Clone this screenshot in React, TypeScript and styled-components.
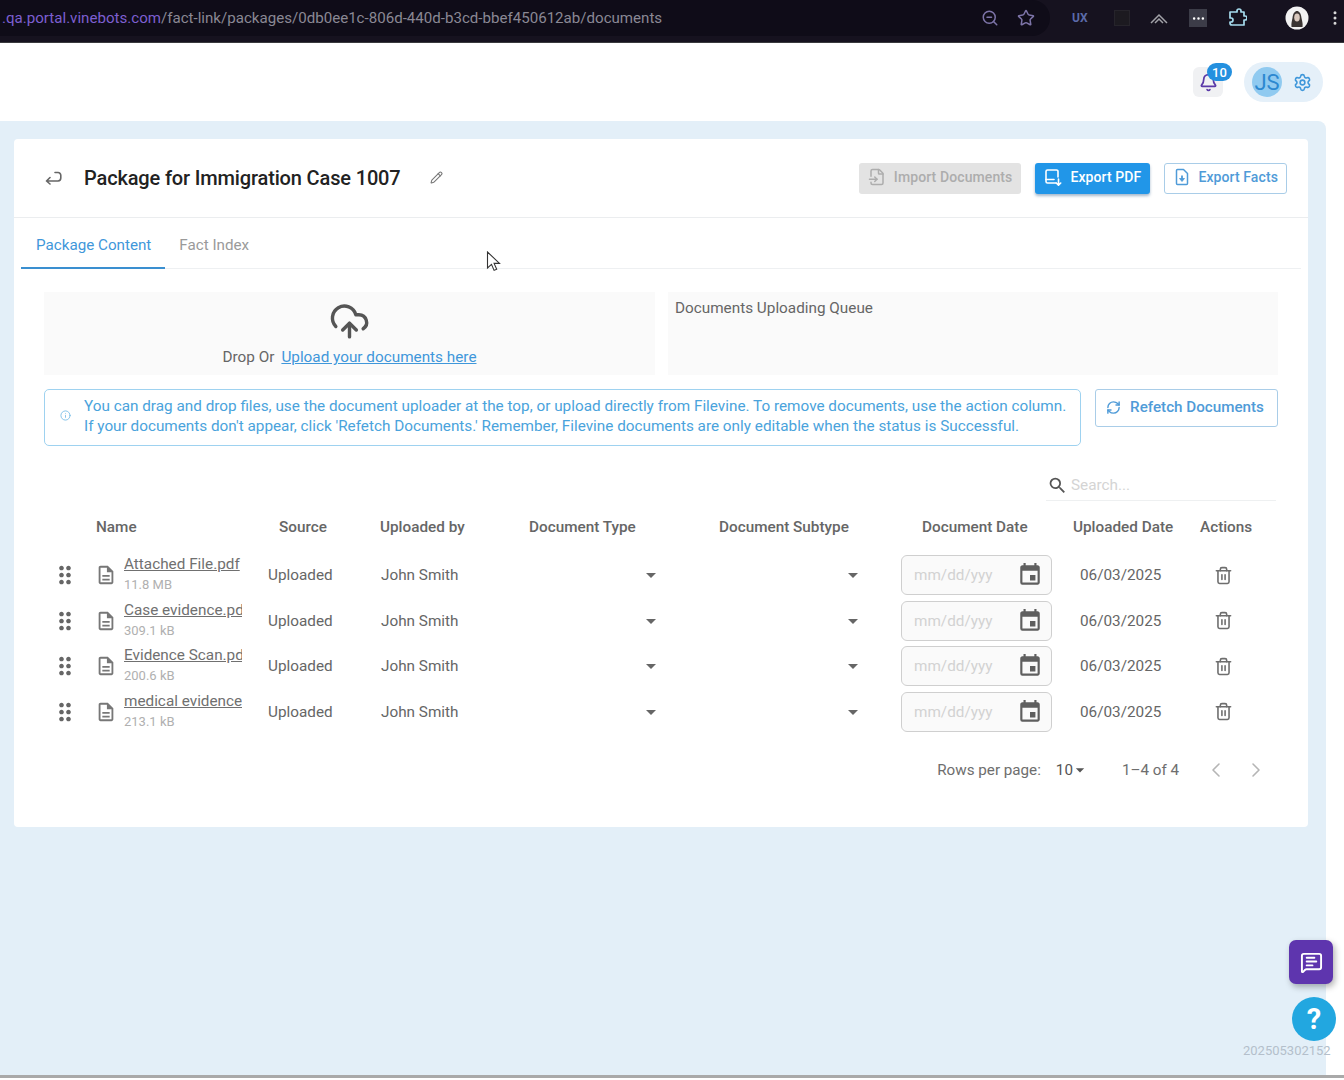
import React from "react";
import styled, { createGlobalStyle } from "styled-components";
import {
  Bell, ChevronLeft, ChevronRight, CloudUpload, Ellipsis, FileInput, Info,
  MessageSquareText, Pencil, RefreshCw, Settings, Star, Trash2, ZoomOut,
} from "lucide-react";
import { MdArrowDropDown, MdDragIndicator, MdEvent, MdOutlineDescription, MdSearch } from "react-icons/md";

const Global = createGlobalStyle`
  html, body { margin: 0; padding: 0; background: #fff; }
  body { font-family: Roboto, "Liberation Sans", sans-serif; color: #666; }
  * { box-sizing: border-box; }
`;

const Page = styled.div`
  position: relative;
  width: 1344px;
  height: 1080px;
  overflow: hidden;
  display: flex;
  flex-direction: column;
`;

const BrowserBar = styled.div`
  height: 43px;
  flex: none;
  background: #16121f;
  border-bottom: 1px solid #3a3a3e;
  display: flex;
  align-items: flex-start;
`;
const AddressPill = styled.div`
  width: 1052px;
  height: 36px;
  background: #0f0c18;
  border-radius: 0 18px 18px 0;
  display: flex;
  align-items: center;
  justify-content: space-between;
  padding: 0 15px 0 2px;
  font-size: 15.1px;
  color: #8a8894;
`;
const Url = styled.div`white-space: nowrap;`;
const UrlHost = styled.span`color: #7d5fd0;`;
const PillIcons = styled.div`
  display: flex;
  align-items: center;
  gap: 18px;
  color: #7d74a8;
`;
const Extensions = styled.div`
  flex: 1;
  height: 36px;
  display: flex;
  align-items: center;
  padding-left: 22px;
  color: #8a8fa0;
`;
const UxMark = styled.span`
  width: 18px;
  font-size: 12px;
  font-weight: 700;
  color: #5b6aa8;
`;
const DarkSquare = styled.span`
  width: 16px;
  height: 16px;
  margin-left: 24px;
  background: #1c1a20;
  border: 1px solid #26242b;
`;
const Peaks = styled.svg`
  margin-left: 20px;
  color: #a2a2a8;
`;
const DotsTile = styled.span`
  width: 18px;
  height: 18px;
  margin-left: 21px;
  background: #3c3c48;
  color: #fff;
  display: flex;
  align-items: center;
  justify-content: center;
`;
const PuzzleTile = styled.svg`
  margin-left: 20px;
  color: #a6dcee;
`;
const ProfileDot = styled.svg`
  margin-left: 38px;
`;
const KebabDots = styled.span`
  margin-left: 17px;
  color: #d8d8d8;
  display: flex;
  transform: rotate(90deg);
`;

const AppHeader = styled.header`
  height: 78px;
  flex: none;
  background: #fff;
  display: flex;
  align-items: center;
  justify-content: flex-end;
  gap: 21px;
  padding: 0 21px 0 0;
`;
const BellBox = styled.div`
  position: relative;
  width: 30px;
  height: 30px;
  border-radius: 6px;
  background: #f0f1f3;
  color: #5a39a8;
  display: flex;
  align-items: center;
  justify-content: center;
`;
const Badge = styled.span`
  position: absolute;
  top: -4px;
  right: -9px;
  min-width: 25px;
  height: 18px;
  border-radius: 9px;
  background: #2490df;
  color: #fff;
  font-size: 13px;
  font-weight: 500;
  display: flex;
  align-items: center;
  justify-content: center;
`;
const UserPill = styled.div`
  width: 79px;
  height: 40px;
  border-radius: 20px;
  background: #e5f0f9;
  display: flex;
  align-items: center;
  gap: 11px;
  padding-left: 8px;
  color: #3f97da;
`;
const Avatar = styled.span`
  width: 30px;
  height: 30px;
  border-radius: 50%;
  background: #90caf0;
  color: #2c88d0;
  font-size: 22px;
  display: flex;
  align-items: center;
  justify-content: center;
`;

const Main = styled.main`
  height: 954px;
  flex: none;
  width: 1326px;
  background: #e3eff8;
  border-top-right-radius: 8px;
  padding: 18px 18px 0 14px;
`;
const FootLine = styled.div`
  height: 3px;
  flex: none;
  background: #a9a9a9;
`;
const Card = styled.section`
  height: 688px;
  background: #fff;
  border-radius: 4px;
`;
const CardHead = styled.div`
  height: 79px;
  border-bottom: 1px solid #ebedef;
  display: flex;
  align-items: center;
  padding: 1px 21px 0 31px;
`;
const BackIcon = styled.svg`
  color: #666;
  margin: 0 22px 2px 0;
`;
const Title = styled.h1`
  margin: 0 0 2px;
  font-size: 20px;
  font-weight: 500;
  letter-spacing: -0.15px;
  color: #222;
  white-space: nowrap;
`;
const EditIcon = styled.span`
  display: flex;
  margin: 0 0 2px 29px;
  color: #777;
`;
const HeadActions = styled.div`
  margin-left: auto;
  display: flex;
  align-items: center;
  gap: 14px;
`;
const ActionButton = styled.button<{ $kind: "disabled" | "primary" | "outline" }>`
  height: 31px;
  border-radius: 3px;
  display: flex;
  align-items: center;
  gap: ${(p) => (p.$kind === "outline" ? "7px" : "8px")};
  padding: 0 ${(p) => (p.$kind === "outline" ? "8px" : "9px")} 3px;
  font: 500 14px Roboto, sans-serif;
  letter-spacing: 0.1px;
  white-space: nowrap;
  background: ${(p) => (p.$kind === "disabled" ? "#e3e3e3" : p.$kind === "primary" ? "#2196e8" : "#fff")};
  color: ${(p) => (p.$kind === "disabled" ? "#adadad" : p.$kind === "primary" ? "#fff" : "#4f9bd8")};
  border: ${(p) => (p.$kind === "outline" ? "1px solid #a9cde8" : "none")};
  box-shadow: ${(p) => (p.$kind === "primary" ? "0 2px 3px rgba(30,80,130,.4)" : "none")};
`;

const Tabs = styled.nav`
  height: 51px;
  margin: 0 7px;
  border-bottom: 1px solid #eef0f2;
  display: flex;
  gap: 14px;
`;
const Tab = styled.div<{ $active?: boolean }>`
  height: 51px;
  padding: 4px ${(p) => (p.$active ? "14px" : "0")} 0 ${(p) => (p.$active ? "15px" : "0")};
  font-size: 15.2px;
  display: flex;
  align-items: center;
  color: ${(p) => (p.$active ? "#3f97da" : "#9a9a9a")};
  border-bottom: 2px solid ${(p) => (p.$active ? "#3a8fd0" : "transparent")};
`;

const Content = styled.div`padding: 23px 30px 0;`;
const UploadRow = styled.div`
  display: grid;
  grid-template-columns: 611px 610px;
  gap: 13px;
`;
const Panel = styled.div`
  height: 83px;
  background: #fafafa;
`;
const DropPanel = styled(Panel)`
  display: flex;
  flex-direction: column;
  align-items: center;
  padding-top: 9px;
  color: #666;
`;
const CloudWrap = styled.span`
  display: flex;
  height: 37px;
  color: #555;
`;
const DropLine = styled.div`
  font-size: 15.3px;
  margin-top: 10px;
  white-space: nowrap;
`;
const DropLink = styled.a`
  color: #3f97da;
  text-decoration: underline;
  margin-left: 7px;
`;
const QueuePanel = styled(Panel)`
  padding: 7px 7px;
  font-size: 15.3px;
  color: #666;
`;
const NoticeRow = styled.div`
  margin-top: 14px;
  display: flex;
  align-items: flex-start;
  gap: 14px;
`;
const Notice = styled.div`
  width: 1037px;
  height: 57px;
  border: 1px solid #9ed2f0;
  border-radius: 5px;
  display: flex;
  align-items: center;
  gap: 13px;
  padding: 0 0 4px 15px;
  color: #4aa3dc;
  font-size: 15.3px;
  line-height: 20px;
  white-space: nowrap;
`;
const NoticeIcon = styled.span`display: flex; color: #7cc0e8;`;
const RefetchButton = styled.button`
  width: 183px;
  height: 38px;
  border: 1px solid #a9cde8;
  border-radius: 3px;
  background: #fff;
  color: #4f9bd8;
  font: 500 15.2px Roboto, sans-serif;
  display: flex;
  align-items: center;
  justify-content: center;
  gap: 9px;
  padding: 0 3px 2px 0;
  white-space: nowrap;
`;
const SearchRow = styled.div`
  margin-top: 27px;
  display: flex;
  justify-content: flex-end;
  padding-right: 2px;
`;
const SearchBox = styled.div`
  width: 230px;
  height: 28px;
  border-bottom: 1px solid #eef0f1;
  display: flex;
  align-items: center;
  gap: 3px;
  padding: 0 0 3px 1px;
  font-size: 15.3px;
  color: #d4d4d4;
`;
const SearchIcon = styled.span`display: flex; color: #555;`;

const COLS = "50px 162px 112px 147px 165px 210px 175px 120px 93px";
const HeadRow = styled.div`
  margin-top: 4px;
  height: 47.5px;
  padding-bottom: 4px;
  display: grid;
  grid-template-columns: ${COLS};
  align-items: center;
`;
const HeadCell = styled.div<{ $indent: number }>`
  padding-left: ${(p) => p.$indent}px;
  font-size: 15.3px;
  font-weight: 500;
  color: #666;
  white-space: nowrap;
`;
const Row = styled.div`
  height: 45.5px;
  display: grid;
  grid-template-columns: ${COLS};
  align-items: center;
  font-size: 15.3px;
  color: #666;
`;
const DragCell = styled.div`
  display: flex;
  padding-left: 7px;
  color: #666;
`;
const NameCell = styled.div`
  display: flex;
  align-items: center;
  gap: 7px;
  padding-left: 1px;
  min-width: 0;
`;
const FileIcon = styled.span`display: flex; color: #777;`;
const NameStack = styled.div`
  width: 118px;
  display: flex;
  flex-direction: column;
  gap: 4px;
  margin-bottom: 3px;
  overflow: hidden;
`;
const FileName = styled.a`
  font-size: 15.3px;
  line-height: 18px;
  color: #707070;
  text-decoration: underline;
  white-space: nowrap;
  overflow: hidden;
`;
const FileSize = styled.span`
  font-size: 13px;
  line-height: 15px;
  color: #b0b0b0;
`;
const TextCell = styled.div<{ $indent: number }>`
  padding-left: ${(p) => p.$indent}px;
  white-space: nowrap;
`;
const SelectCell = styled.div<{ $inset: number }>`
  display: flex;
  justify-content: flex-end;
  padding-right: ${(p) => p.$inset}px;
  color: #666;
`;
const DateField = styled.div`
  width: 151px;
  height: 40px;
  margin-left: 11px;
  border: 1px solid #cfcfcf;
  border-radius: 6px;
  background: #fafafa;
  display: flex;
  align-items: center;
  justify-content: space-between;
  padding: 0 8px 0 12px;
  font-size: 15.3px;
  color: #d2d2d2;
`;
const CalendarIcon = styled.span`display: flex; color: #5f5f5f;`;
const TrashCell = styled.div`
  display: flex;
  padding-left: 28.5px;
  color: #6e6e6e;
`;
const Pager = styled.div`
  margin-top: 19px;
  height: 32px;
  display: flex;
  align-items: center;
  justify-content: flex-end;
  padding-right: 10px;
  font-size: 15.2px;
  color: #6e6e6e;
`;
const PageSize = styled.div`
  margin-left: 15px;
  display: flex;
  align-items: center;
  color: #555;
`;
const PageArrow = styled.span`
  display: flex;
  margin-left: -3px;
`;
const PageRange = styled.span`margin-left: 32px;`;
const PageNav = styled.span`
  margin-left: 25px;
  display: flex;
  gap: 16px;
  color: #b5b5b5;
`;

const ChatButton = styled.div`
  position: absolute;
  left: 1289px;
  top: 940px;
  width: 44px;
  height: 44px;
  border-radius: 7px;
  background: #5e35ae;
  box-shadow: 2px 3px 6px rgba(0, 0, 0, .3);
  color: #fff;
  display: flex;
  align-items: center;
  justify-content: center;
`;
const HelpButton = styled.div`
  position: absolute;
  left: 1292px;
  top: 997px;
  width: 44px;
  height: 44px;
  border-radius: 50%;
  background: #22a7e0;
  color: #fff;
  font-size: 29px;
  font-weight: 700;
  display: flex;
  align-items: center;
  justify-content: center;
`;
const Version = styled.div`
  position: absolute;
  left: 1243px;
  top: 1043px;
  font-size: 13px;
  color: #b4bfcb;
`;
const Cursor = styled.svg`
  position: absolute;
  left: 486px;
  top: 251px;
`;

const files = [
  { name: "Attached File.pdf", size: "11.8 MB" },
  { name: "Case evidence.pdf", size: "309.1 kB" },
  { name: "Evidence Scan.pdf", size: "200.6 kB" },
  { name: "medical evidence.pdf", size: "213.1 kB" },
];

const headers: [string, number][] = [
  ["", 0], ["Name", 2], ["Source", 23], ["Uploaded by", 12], ["Document Type", 14],
  ["Document Subtype", 39], ["Document Date", 32], ["Uploaded Date", 8], ["Actions", 15],
];

const PageDownIcon = () => (
  <svg width="18" height="18" viewBox="0 0 18 18" fill="none" stroke="currentColor" strokeWidth="1.6" strokeLinecap="round" strokeLinejoin="round">
    <path d="M12 15H3.500A1.500 1.500 0 0 1 2 13.500v-10A1.500 1.500 0 0 1 3.500 2h9A1.500 1.500 0 0 1 14 3.500V9" />
    <path d="M2 11.500h8M14.500 11v6M12.300 15l2.200 2.200 2.200-2.200" />
  </svg>
);

const FileArrowIcon = () => (
  <svg width="18" height="18" viewBox="0 0 18 18" fill="none" stroke="currentColor" strokeWidth="1.5" strokeLinejoin="round">
    <path d="M4.500 1.500h6l4 4v10a1 1 0 0 1-1 1h-9a1 1 0 0 1-1-1v-13a1 1 0 0 1 1-1z" />
    <path d="M9 7.500v4.500" strokeWidth="1.8" />
    <path d="M6.500 10.500h5L9 13.500z" fill="currentColor" strokeWidth="0.8" />
  </svg>
);

export default function App() {
  return (
    <Page>
      <Global />
      <BrowserBar>
        <AddressPill>
          <Url><UrlHost>.qa.portal.vinebots.com</UrlHost>/fact-link/packages/0db0ee1c-806d-440d-b3cd-bbef450612ab/documents</Url>
          <PillIcons><ZoomOut size={18} /><Star size={18} /></PillIcons>
        </AddressPill>
        <Extensions>
          <UxMark>UX</UxMark>
          <DarkSquare />
          <Peaks width="18" height="12" viewBox="0 0 18 12" fill="none" stroke="currentColor" strokeWidth="1.5"><path d="M1 11 9 3l8 8M5 11l4-4 4 4" /></Peaks>
          <DotsTile><Ellipsis size={15} /></DotsTile>
          <PuzzleTile width="20" height="20" viewBox="0 0 20 20" fill="none" stroke="currentColor" strokeWidth="1.7" strokeLinejoin="round">
            <path d="M3 4h7V3a2 2 0 0 1 4 0v1h3v4h1a2 2 0 0 1 0 4h-1v5H5a2 2 0 0 1-2-2v-1h1a2 2 0 0 0 0-4H3z" />
          </PuzzleTile>
          <ProfileDot width="24" height="24" viewBox="0 0 24 24">
            <circle cx="12" cy="12" r="11.500" fill="#f2f2f2" />
            <path d="M6.500 21c-.5-4 .5-6 1-9 .5-5 2.500-7 4.500-7s4 2 4.500 7c.5 3 1.500 5 1 9z" fill="#3a3432" />
            <ellipse cx="12" cy="11.500" rx="2.800" ry="4" fill="#d9c8bd" />
          </ProfileDot>
          <KebabDots><Ellipsis size={18} /></KebabDots>
        </Extensions>
      </BrowserBar>

      <AppHeader>
        <BellBox>
          <Bell size={19} strokeWidth={2.2} />
          <Badge>10</Badge>
        </BellBox>
        <UserPill>
          <Avatar>JS</Avatar>
          <Settings size={19} />
        </UserPill>
      </AppHeader>

      <Main>
        <Card>
          <CardHead>
            <BackIcon width="17" height="14" viewBox="0 0 17 14" fill="none" stroke="currentColor" strokeWidth="1.6" strokeLinecap="round" strokeLinejoin="round">
              <path d="M10 1.500h3a2.800 2.800 0 0 1 2.800 2.800v2.700A3 3 0 0 1 13 10H1.500M5 6.500 1.500 10 5 13" />
            </BackIcon>
            <Title>Package for Immigration Case 1007</Title>
            <EditIcon><Pencil size={13} /></EditIcon>
            <HeadActions>
              <ActionButton $kind="disabled"><FileInput size={18} />Import Documents</ActionButton>
              <ActionButton $kind="primary"><PageDownIcon />Export PDF</ActionButton>
              <ActionButton $kind="outline"><FileArrowIcon />Export Facts</ActionButton>
            </HeadActions>
          </CardHead>
          <Tabs>
            <Tab $active>Package Content</Tab>
            <Tab>Fact Index</Tab>
          </Tabs>
          <Content>
            <UploadRow>
              <DropPanel>
                <CloudWrap><CloudUpload size={41} strokeWidth={2} /></CloudWrap>
                <DropLine>Drop Or<DropLink>Upload your documents here</DropLink></DropLine>
              </DropPanel>
              <QueuePanel>Documents Uploading Queue</QueuePanel>
            </UploadRow>
            <NoticeRow>
              <Notice>
                <NoticeIcon><Info size={11} /></NoticeIcon>
                <div>
                  You can drag and drop files, use the document uploader at the top, or upload directly from Filevine. To remove documents, use the action column.<br />
                  If your documents don't appear, click 'Refetch Documents.' Remember, Filevine documents are only editable when the status is Successful.
                </div>
              </Notice>
              <RefetchButton><RefreshCw size={15} strokeWidth={2.3} />Refetch Documents</RefetchButton>
            </NoticeRow>
            <SearchRow>
              <SearchBox>
                <SearchIcon><MdSearch size={21} /></SearchIcon>
                Search...
              </SearchBox>
            </SearchRow>
            <HeadRow>
              {headers.map(([label, indent], i) => (
                <HeadCell key={i} $indent={indent}>{label}</HeadCell>
              ))}
            </HeadRow>
            {files.map((f) => (
              <Row key={f.name}>
                <DragCell><MdDragIndicator size={28} /></DragCell>
                <NameCell>
                  <FileIcon><MdOutlineDescription size={22} /></FileIcon>
                  <NameStack>
                    <FileName>{f.name}</FileName>
                    <FileSize>{f.size}</FileSize>
                  </NameStack>
                </NameCell>
                <TextCell $indent={12}>Uploaded</TextCell>
                <TextCell $indent={13}>John Smith</TextCell>
                <SelectCell $inset={17}><MdArrowDropDown size={24} /></SelectCell>
                <SelectCell $inset={25}><MdArrowDropDown size={24} /></SelectCell>
                <div>
                  <DateField>
                    mm/dd/yyy
                    <CalendarIcon><MdEvent size={26} /></CalendarIcon>
                  </DateField>
                </div>
                <TextCell $indent={15}>06/03/2025</TextCell>
                <TrashCell><Trash2 size={19} /></TrashCell>
              </Row>
            ))}
            <Pager>
              Rows per page:
              <PageSize>10<PageArrow><MdArrowDropDown size={20} /></PageArrow></PageSize>
              <PageRange>1–4 of 4</PageRange>
              <PageNav><ChevronLeft size={24} strokeWidth={1.6} /><ChevronRight size={24} strokeWidth={1.6} /></PageNav>
            </Pager>
          </Content>
        </Card>
      </Main>
      <FootLine />

      <ChatButton><MessageSquareText size={23} strokeWidth={2} /></ChatButton>
      <HelpButton>?</HelpButton>
      <Version>202505302152</Version>
      <Cursor width="16" height="22" viewBox="0 0 16 22"><path d="M1.5 1v16l4-3.600 2.600 6 2.600-1.100-2.600-5.900h5.400z" fill="#fff" stroke="#333" strokeWidth="1.1" /></Cursor>
    </Page>
  );
}
